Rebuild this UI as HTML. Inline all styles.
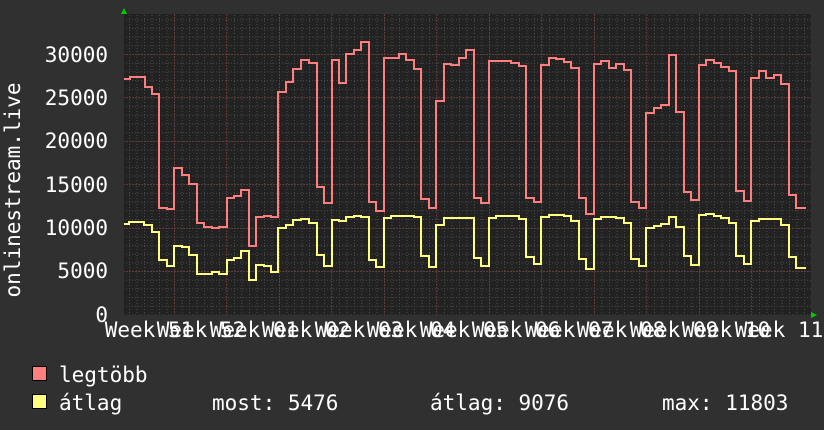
<!DOCTYPE html>
<html><head><meta charset="utf-8"><style>
html,body{margin:0;padding:0;background:#303030;}
svg{display:block}
text{font-family:"DejaVu Sans Mono","Liberation Mono",monospace;font-size:21px;fill:#fff}
</style></head><body>
<svg width="824" height="430" viewBox="0 0 824 430">
<defs>
<pattern id="gv" patternUnits="userSpaceOnUse" x="129" y="0" width="7.5" height="430">
<line x1="0.5" y1="0" x2="0.5" y2="430" stroke="#4a4a4a" stroke-width="1" stroke-dasharray="1,2"/>
</pattern>
<pattern id="gh" patternUnits="userSpaceOnUse" x="0" y="314.5" width="824" height="8.683">
<line x1="0" y1="0.5" x2="824" y2="0.5" stroke="#4a4a4a" stroke-width="1" stroke-dasharray="1,2"/>
</pattern>
</defs>
<rect x="124" y="14" width="687" height="301" fill="#222"/>
<rect x="124" y="14" width="687" height="301" fill="url(#gv)"/>
<rect x="124" y="14" width="687" height="301" fill="url(#gh)"/>
<g stroke="#7a3434" stroke-width="1" stroke-dasharray="1,2">
<line x1="124" y1="271.5" x2="811" y2="271.5"/><line x1="124" y1="228.5" x2="811" y2="228.5"/>
<line x1="124" y1="184.5" x2="811" y2="184.5"/><line x1="124" y1="141.5" x2="811" y2="141.5"/>
<line x1="124" y1="97.5" x2="811" y2="97.5"/><line x1="124" y1="54.5" x2="811" y2="54.5"/>
<line x1="174.5" y1="14" x2="174.5" y2="315"/><line x1="226.5" y1="14" x2="226.5" y2="315"/>
<line x1="279.5" y1="14" x2="279.5" y2="315"/><line x1="331.5" y1="14" x2="331.5" y2="315"/>
<line x1="384.5" y1="14" x2="384.5" y2="315"/><line x1="436.5" y1="14" x2="436.5" y2="315"/>
<line x1="489.5" y1="14" x2="489.5" y2="315"/><line x1="541.5" y1="14" x2="541.5" y2="315"/>
<line x1="594.5" y1="14" x2="594.5" y2="315"/><line x1="646.5" y1="14" x2="646.5" y2="315"/>
<line x1="699.5" y1="14" x2="699.5" y2="315"/><line x1="751.5" y1="14" x2="751.5" y2="315"/>
</g>
<path fill="none" stroke="#ff7f7f" stroke-width="2" d="M124 79 H130 V77 H145 V87 H152 V94 H159 V208 H167 V209 H174 V168 H182 V175 H189 V184 H197 V223 H204 V227 H212 V228 H219 V227 H227 V198 H234 V196 H241 V190 H249 V246 H256 V217 H264 V216 H271 V217 H278 V92 H286 V82 H293 V69 H301 V60 H309 V63 H317 V187 H324 V203 H332 V60 H339 V83 H346 V54 H354 V50 H361 V42 H369 V202 H376 V211 H384 V58 H399 V54 H406 V60 H414 V69 H421 V199 H429 V208 H436 V101 H444 V64 H451 V65 H459 V58 H466 V50 H474 V198 H481 V203 H489 V61 H511 V63 H519 V66 H526 V198 H534 V202 H541 V65 H549 V58 H556 V59 H564 V62 H571 V68 H579 V198 H586 V214 H594 V64 H601 V61 H609 V68 H616 V64 H624 V70 H631 V202 H639 V208 H646 V113 H654 V108 H661 V105 H669 V55 H676 V112 H684 V192 H691 V200 H699 V65 H706 V60 H714 V63 H721 V67 H729 V71 H736 V191 H744 V201 H751 V78 H759 V71 H766 V78 H774 V75 H781 V84 H789 V195 H796 V208 H806"/>
<path fill="none" stroke="#ffff7f" stroke-width="2" d="M124 224 H129 V222 H144 V225 H152 V232 H159 V260 H167 V266 H174 V246 H182 V247 H189 V255 H197 V274 H212 V272 H219 V274 H227 V260 H234 V258 H241 V251 H249 V280 H256 V265 H264 V266 H271 V272 H278 V228 H286 V225 H293 V220 H301 V219 H309 V223 H317 V255 H324 V266 H332 V220 H339 V221 H346 V217 H354 V216 H361 V217 H369 V260 H376 V267 H384 V218 H391 V216 H414 V217 H421 V256 H429 V267 H436 V225 H444 V218 H466 V218 H474 V258 H481 V266 H489 V218 H496 V216 H519 V219 H526 V257 H534 V264 H541 V217 H549 V215 H564 V216 H571 V221 H579 V259 H586 V269 H594 V219 H601 V217 H616 V218 H624 V223 H631 V259 H639 V266 H646 V228 H654 V226 H661 V224 H669 V217 H676 V227 H684 V256 H691 V265 H699 V215 H706 V214 H714 V216 H721 V218 H729 V223 H736 V256 H744 V264 H751 V221 H759 V219 H774 V219 H781 V225 H789 V257 H796 V268 H806"/>
<polygon points="121,14 127,14 124,8" fill="#00cc00"/>
<polygon points="811,312 811,318 817,315" fill="#00cc00"/>
<g text-anchor="end">
<text x="108" y="62">30000</text><text x="108" y="105">25000</text>
<text x="108" y="148">20000</text><text x="108" y="192">15000</text>
<text x="108" y="235">10000</text><text x="108" y="278">5000</text>
<text x="108" y="322">0</text>
</g>
<text transform="translate(20,190) rotate(-90)" text-anchor="middle">onlinestream.live</text>
<g text-anchor="middle">
<text x="149" y="337">Week 51</text><text x="201" y="337">Week 52</text>
<text x="254" y="337">Week 01</text><text x="306" y="337">Week 02</text>
<text x="359" y="337">Week 03</text><text x="411" y="337">Week 04</text>
<text x="464" y="337">Week 05</text><text x="516" y="337">Week 06</text>
<text x="569" y="337">Week 07</text><text x="621" y="337">Week 08</text>
<text x="674" y="337">Week 09</text><text x="726" y="337">Week 10</text>
<text x="779" y="337">Week 11</text>
</g>
<rect x="32.5" y="366.5" width="14" height="14" fill="#ff7f7f" stroke="#000"/>
<rect x="32.5" y="394.5" width="14" height="14" fill="#ffff7f" stroke="#000"/>
<text x="59" y="382">legtöbb</text>
<text x="59" y="410">átlag</text>
<text x="212" y="410">most: 5476</text>
<text x="430" y="410">átlag: 9076</text>
<text x="662" y="410">max: 11803</text>
</svg>
</body></html>
